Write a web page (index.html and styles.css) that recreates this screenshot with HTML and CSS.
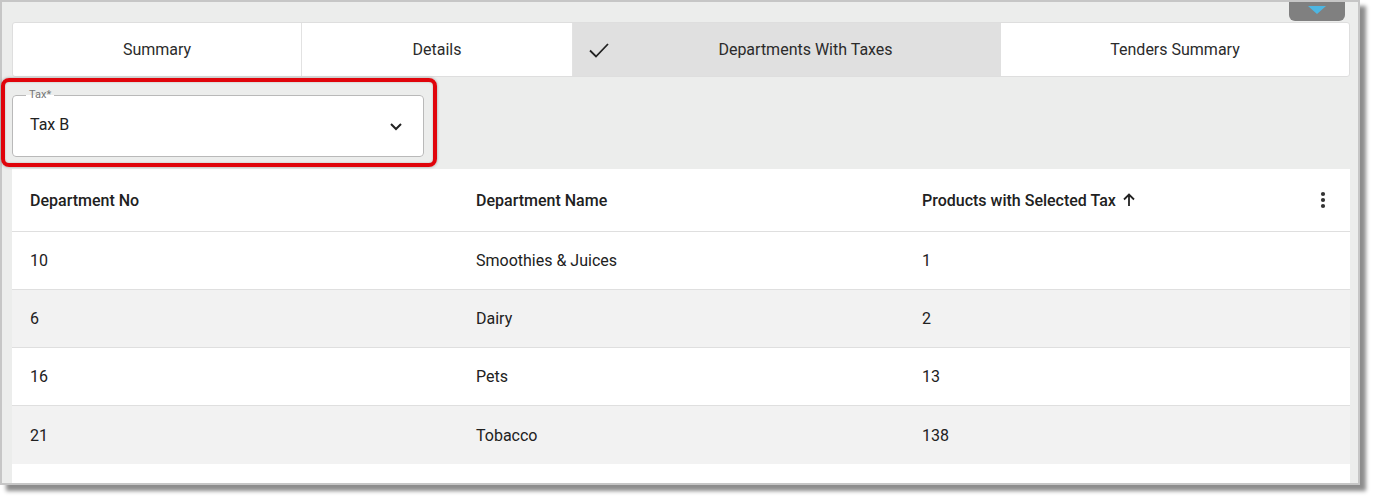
FILE: index.html
```html
<!DOCTYPE html>
<html lang="en">
<head>
<meta charset="utf-8">
<title>Departments With Taxes</title>
<link rel="stylesheet" href="styles.css">
</head>
<body>
<div class="frame">
  <div class="collapse-tab">
    <svg width="18" height="8" viewBox="0 0 18 8"><polygon points="0,0 18,0 9,8" fill="#4db6e2"/></svg>
  </div>

  <div class="tabs">
    <div class="tab sep">Summary</div>
    <div class="tab sep">Details</div>
    <div class="tab active">
      <svg class="check" width="22" height="18" viewBox="0 0 22 18"><path d="M2 9.5 L8 15.5 L20 3" fill="none" stroke="#222" stroke-width="1.8"/></svg>
      <span class="tab-label">Departments With Taxes</span>
    </div>
    <div class="tab">Tenders Summary</div>
  </div>

  <div class="filter">
    <fieldset class="field">
      <legend>Tax*</legend>
      <div class="field-row">
        <span class="field-value">Tax B</span>
        <svg class="chevron" width="24" height="24" viewBox="0 0 24 24"><path d="M7 10 L12 15 L17 10" fill="none" stroke="#222" stroke-width="2"/></svg>
      </div>
    </fieldset>
  </div>
  <div class="highlight"></div>

  <div class="grid">
    <div class="row head">
      <div class="cell">Department No</div>
      <div class="cell">Department Name</div>
      <div class="cell last">
        <span class="sorted">Products with Selected Tax
          <svg width="16" height="16" viewBox="0 0 16 16"><path d="M8 14 V3 M3 7.5 L8 2.5 L13 7.5" fill="none" stroke="#222" stroke-width="1.8"/></svg>
        </span>
        <svg class="kebab" width="6" height="18" viewBox="0 0 6 18"><circle cx="3" cy="3" r="2.1" fill="#333"/><circle cx="3" cy="9" r="2.1" fill="#333"/><circle cx="3" cy="15" r="2.1" fill="#333"/></svg>
      </div>
    </div>
    <div class="row">
      <div class="cell">10</div>
      <div class="cell">Smoothies &amp; Juices</div>
      <div class="cell">1</div>
    </div>
    <div class="row alt">
      <div class="cell">6</div>
      <div class="cell">Dairy</div>
      <div class="cell">2</div>
    </div>
    <div class="row">
      <div class="cell">16</div>
      <div class="cell">Pets</div>
      <div class="cell">13</div>
    </div>
    <div class="row alt">
      <div class="cell">21</div>
      <div class="cell">Tobacco</div>
      <div class="cell">138</div>
    </div>
  </div>
</div>
</body>
</html>
```

FILE: styles.css
```css
* { box-sizing: border-box; }

html, body {
  margin: 0;
  padding: 0;
  background: #ffffff;
}

body {
  min-height: 500px;
  font-family: Roboto, "Liberation Sans", Arial, sans-serif;
  color: #212121;
}

.frame {
  position: relative;
  width: 1360px;
  height: 485px;
  border: 2px solid #c6c6c6;
  background: #ecedec;
  box-shadow: 6px 6px 4px rgba(0, 0, 0, 0.45);
  padding: 20px 8px 0 10px;
  display: flex;
  flex-direction: column;
}

.collapse-tab {
  position: absolute;
  top: 0;
  left: 1287px;
  width: 56px;
  height: 19px;
  background: #808080;
  border-radius: 0 0 6px 6px;
  display: flex;
  justify-content: center;
  padding-top: 4px;
}

.tabs {
  display: grid;
  grid-template-columns: 289px 271px 428px 1fr;
  height: 55px;
  background: #ffffff;
  border: 1px solid #dedede;
  border-radius: 3px;
  flex: none;
}

.tab {
  display: flex;
  align-items: center;
  justify-content: center;
  font-size: 16px;
  color: #2b2b2b;
}

.tab.sep {
  border-right: 1px solid #e2e2e2;
}

.tab.active {
  background: #e0e0e0;
  justify-content: flex-start;
  padding-left: 15px;
}

.check { flex: none; }

.tab-label {
  flex: 1;
  text-align: center;
}

.filter {
  flex: none;
  height: 92px;
  padding-top: 12px;
}

.field {
  width: 412px;
  margin: 0;
  padding: 0 15px 0 13px;
  border: 1px solid #b9b9b9;
  border-radius: 4px;
  background: #ffffff;
  min-width: 0;
}

.field legend {
  font-size: 11px;
  line-height: 12px;
  color: #767676;
  padding: 0 3px;
  margin-left: 0;
}

.field-row {
  height: 55px;
  padding-bottom: 8px;
  display: flex;
  align-items: center;
  justify-content: space-between;
}

.field-value {
  font-size: 16px;
  color: #222;
  padding-left: 4px;
}

.chevron { margin-top: 3px; }

.highlight {
  position: absolute;
  left: -1px;
  top: 76px;
  width: 436px;
  height: 89px;
  border: 4px solid #e0040b;
  border-radius: 8px;
  box-shadow: 0 0 3px rgba(0, 0, 0, 0.35), inset 0 0 2px rgba(0, 0, 0, 0.25);
  pointer-events: none;
}

.grid {
  flex: 1;
  background: #ffffff;
}

.row {
  display: grid;
  grid-template-columns: 446px 446px 1fr;
  height: 58px;
  border-bottom: 1px solid #dfdfdf;
  font-size: 16px;
}

.row.head {
  height: 63px;
  font-weight: 500;
}

.row.alt {
  background: #f2f2f2;
}

.row:last-child {
  border-bottom: none;
}

.cell {
  display: flex;
  align-items: center;
  padding-left: 18px;
}

.cell.last {
  justify-content: space-between;
  padding-right: 24px;
}

.sorted {
  display: inline-flex;
  align-items: center;
  gap: 5px;
}
```
